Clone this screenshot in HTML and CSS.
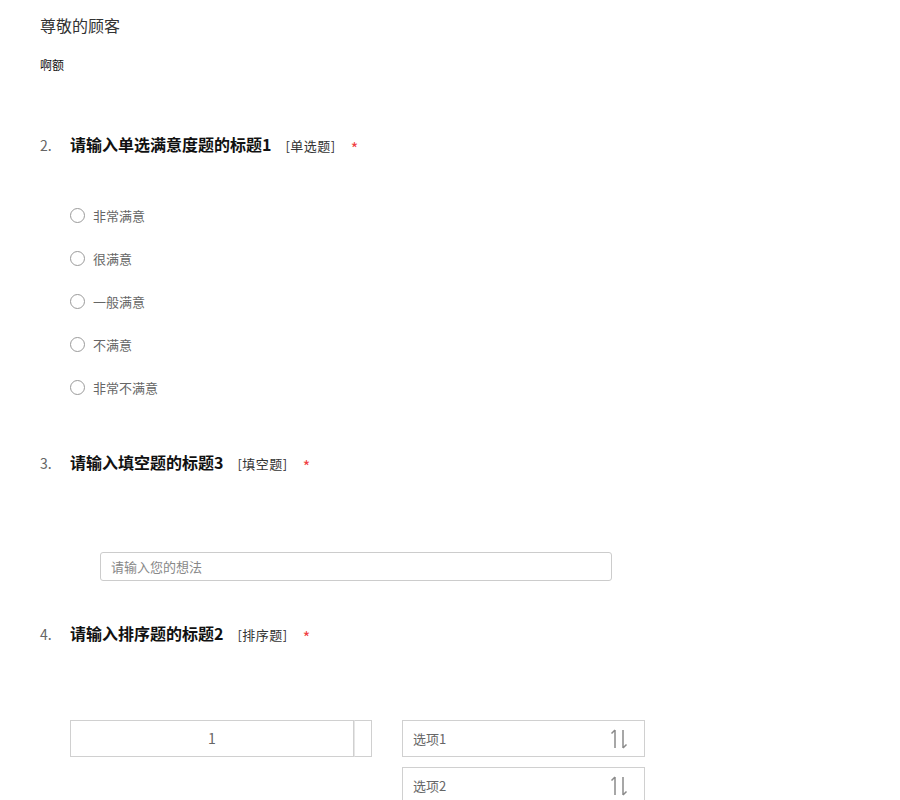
FILE: index.html
```html
<!DOCTYPE html>
<html lang="zh">
<head>
<meta charset="utf-8">
<link rel="stylesheet" href="styles.css">
</head>
<body>
<div class="page">
  <div class="greet">尊敬的顾客</div>
  <div class="desc">啊额</div>

  <div class="q q2">
    <div class="q-head">
      <span class="num">2.</span>
      <span class="title">请输入单选满意度题的标题1</span>
      <span class="type">[单选题]</span>
      <span class="req">*</span>
    </div>
    <div class="options">
      <label class="opt"><span class="radio"></span><span>非常满意</span></label>
      <label class="opt"><span class="radio"></span><span>很满意</span></label>
      <label class="opt"><span class="radio"></span><span>一般满意</span></label>
      <label class="opt"><span class="radio"></span><span>不满意</span></label>
      <label class="opt"><span class="radio"></span><span>非常不满意</span></label>
    </div>
  </div>

  <div class="q q3">
    <div class="q-head">
      <span class="num">3.</span>
      <span class="title">请输入填空题的标题3</span>
      <span class="type">[填空题]</span>
      <span class="req">*</span>
    </div>
    <div class="text-input">请输入您的想法</div>
  </div>

  <div class="q q4">
    <div class="q-head">
      <span class="num">4.</span>
      <span class="title">请输入排序题的标题2</span>
      <span class="type">[排序题]</span>
      <span class="req">*</span>
    </div>
    <div class="sort">
      <div class="sort-left">
        <div class="rank">1</div>
        <div class="rank-side"></div>
      </div>
      <div class="sort-right">
        <div class="item"><span>选项1</span>
          <svg class="sort-icon" width="18" height="22" viewBox="0 0 18 22"><path d="M5 2V20M5 2L1.5 5.5M13 2V20M13 20L16.5 16.5" fill="none" stroke="#8a8a8a" stroke-width="1.5"/></svg>
        </div>
        <div class="item"><span>选项2</span>
          <svg class="sort-icon" width="18" height="22" viewBox="0 0 18 22"><path d="M5 2V20M5 2L1.5 5.5M13 2V20M13 20L16.5 16.5" fill="none" stroke="#8a8a8a" stroke-width="1.5"/></svg>
        </div>
      </div>
    </div>
  </div>
</div>
</body>
</html>
```
FILE: styles.css
```css
html, body {
  margin: 0;
  padding: 0;
  background: #fff;
}
body {
  font-family: "Noto Sans CJK SC", "Noto Sans", sans-serif;
  color: #333;
}
.page {
  padding: 12px 40px 0 40px;
}
.greet {
  font-size: 16px;
  line-height: 26px;
  color: #333;
}
.desc {
  margin-top: 17px;
  font-size: 12px;
  line-height: 20px;
  color: #111;
}
.q-head {
  display: flex;
  align-items: baseline;
  height: 24px;
  line-height: 24px;
}
.num {
  width: 30px;
  font-size: 14px;
  color: #666;
}
.title {
  font-size: 16px;
  font-weight: bold;
  color: #111;
}
.type {
  margin-left: 14px;
  font-size: 13px;
  letter-spacing: 0.5px;
  color: #333;
}
.req {
  align-self: flex-start;
  margin: 4px 0 0 15px;
  font-size: 16px;
  line-height: 24px;
  color: #f04040;
}
.q2 { margin-top: 57px; }
.options {
  margin-top: 48px;
  padding-left: 30px;
  display: flex;
  flex-direction: column;
  gap: 21px;
}
.opt {
  display: flex;
  align-items: center;
  height: 22px;
  font-size: 13px;
  color: #666;
}
.radio {
  width: 13px;
  height: 13px;
  border: 1px solid #9a9a9a;
  border-radius: 50%;
  margin-right: 8px;
}
.q3 { margin-top: 52px; }
.text-input {
  margin: 78px 0 0 60px;
  width: 500px;
  height: 27px;
  border: 1px solid #ccc;
  border-radius: 3px;
  padding-left: 10px;
  font-size: 13px;
  line-height: 27px;
  color: #888;
}
.q4 { margin-top: 40px; }
.sort {
  margin-top: 75px;
  padding-left: 30px;
  display: flex;
  gap: 30px;
}
.sort-left {
  display: flex;
  height: 37px;
  align-self: flex-start;
}
.rank {
  width: 282px;
  height: 35px;
  border: 1px solid #d0d0d0;
  text-align: center;
  line-height: 35px;
  font-size: 14px;
  color: #666;
}
.rank-side {
  width: 16px;
  height: 35px;
  border: 1px solid #d0d0d0;
  border-left-color: #e6e6e6;
}
.sort-right {
  display: flex;
  flex-direction: column;
  gap: 10px;
}
.item {
  width: 215px;
  height: 35px;
  border: 1px solid #d0d0d0;
  display: flex;
  align-items: center;
  justify-content: space-between;
  padding: 0 16px 0 10px;
  font-size: 13px;
  color: #666;
}
.sort-icon { display: block; }
```
